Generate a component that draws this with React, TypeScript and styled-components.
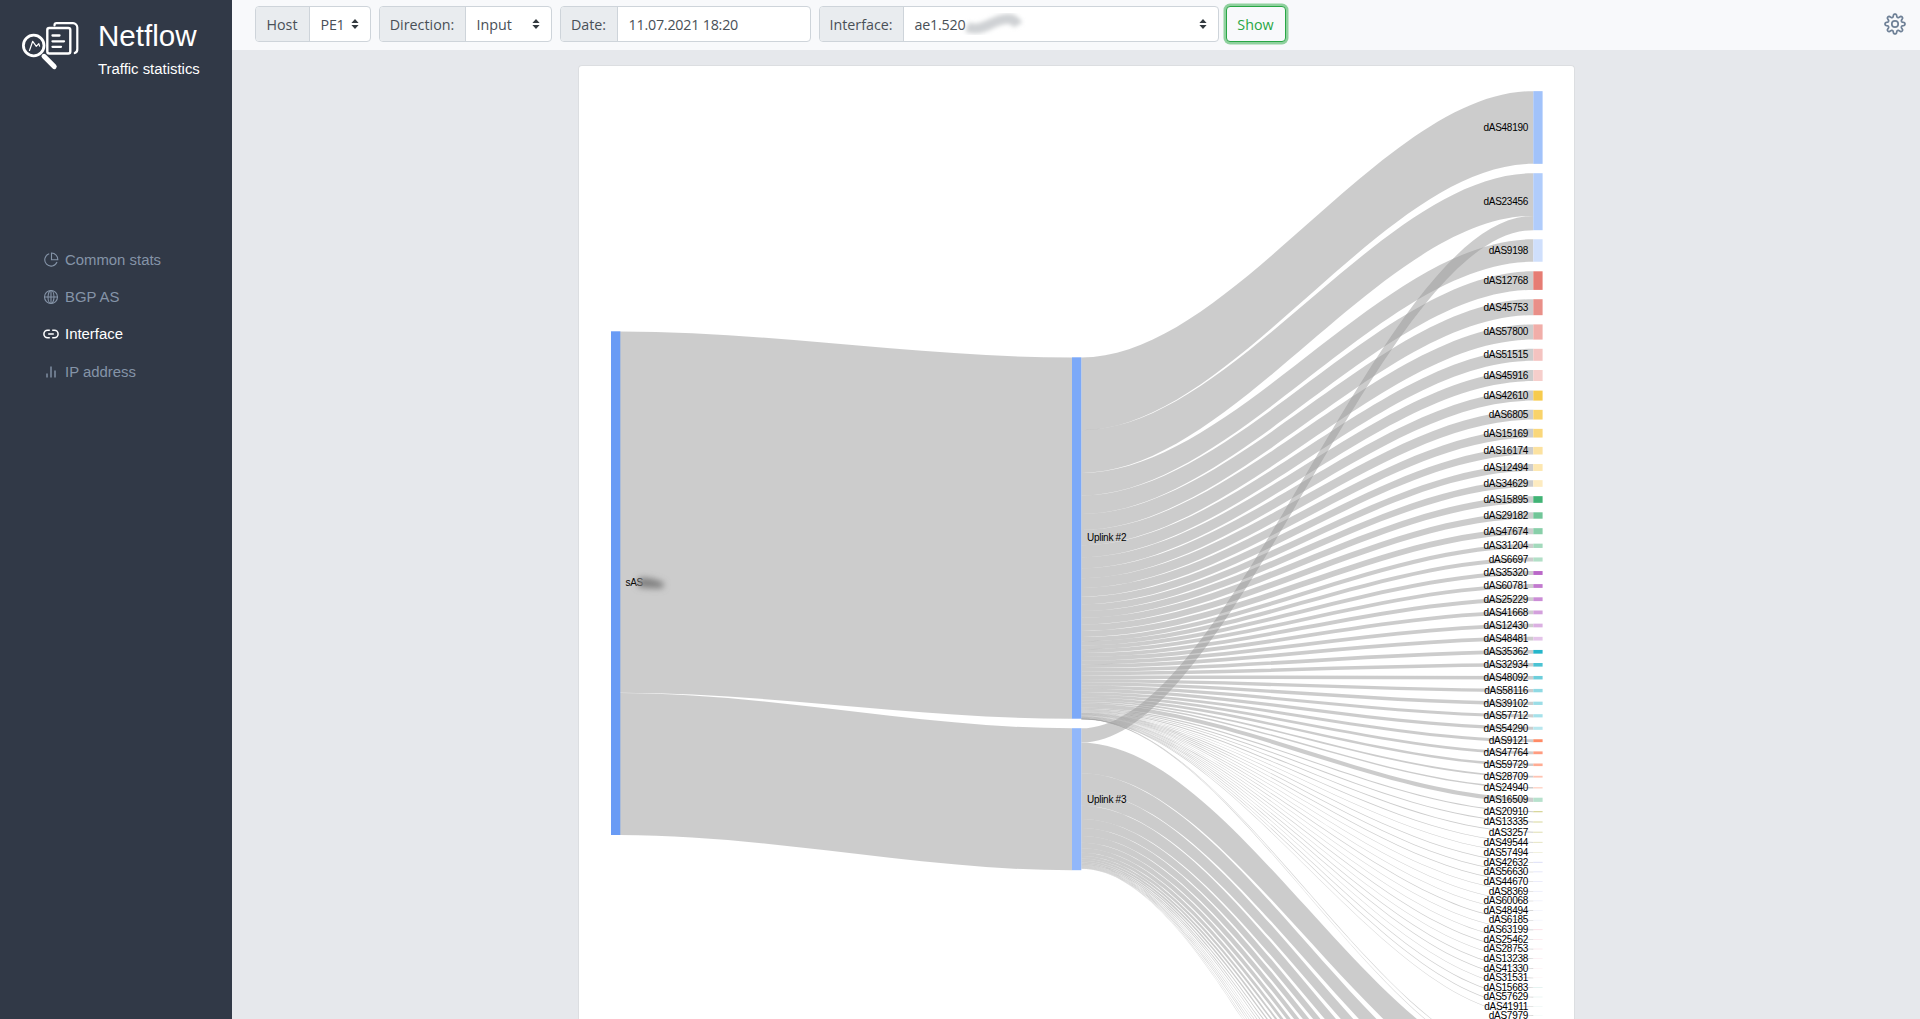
import React from "react";
import styled, { createGlobalStyle } from "styled-components";

const GlobalStyle = createGlobalStyle`
  *, *::before, *::after { box-sizing: border-box; }
  body { margin: 0; overflow: hidden; background: #e6e8ec; font-family: "Liberation Sans", Arial, sans-serif; }
`;

const Page = styled.div`
  display: flex;
  width: 100%;
  height: 100vh;
  overflow: hidden;
`;

const Sidebar = styled.aside`
  flex: none;
  width: 232px;
  height: 100%;
  background: #313947;
  color: #fff;
`;

const Brand = styled.div`
  display: flex;
  height: 90px;
  padding: 18px 0 0 20px;
  gap: 18px;
`;

const BrandText = styled.div`
  display: flex;
  flex-direction: column;
`;

const BrandName = styled.h1`
  margin: 0;
  font-size: 29.6px;
  font-weight: 400;
  line-height: 36px;
`;

const BrandSub = styled.span`
  margin-top: 6px;
  font-size: 14.9px;
  line-height: 18px;
`;

const Menu = styled.nav`
  display: flex;
  flex-direction: column;
  padding: 151px 0 0 43px;
`;

const MenuItem = styled.a<{ $active?: boolean }>`
  display: flex;
  align-items: center;
  gap: 6px;
  height: 37.3px;
  font-size: 14.9px;
  color: ${(p) => (p.$active ? "#ffffff" : "#8594a8")};
`;

const Main = styled.main`
  flex: 1;
  min-width: 0;
  display: flex;
  flex-direction: column;
`;

const Toolbar = styled.header`
  flex: none;
  display: flex;
  align-items: center;
  gap: 8px;
  height: 50px;
  padding: 0 13.5px 2px 22.5px;
  background: #f8f9fb;
  font-family: "Open Sans", "Noto Sans", sans-serif;
`;

const Group = styled.div<{ $w: number }>`
  display: flex;
  width: ${(p) => p.$w}px;
  height: 36px;
  border: 1px solid #ced4da;
  border-radius: 4px;
  overflow: hidden;
  background: #fff;
  color: #495057;
  font-size: 14.3px;
`;

const Caption = styled.label<{ $w: number }>`
  flex: none;
  display: flex;
  align-items: center;
  justify-content: center;
  width: ${(p) => p.$w}px;
  border-right: 1px solid #ced4da;
  background: #e9ecef;
`;

const Field = styled.div<{ $pad: number; $tight?: boolean }>`
  flex: 1;
  display: flex;
  align-items: center;
  white-space: nowrap;
  letter-spacing: ${(p) => (p.$tight ? "-0.22px" : "normal")};
  padding: 0 ${(p) => p.$pad}px 0 11px;
`;

const Smudge = styled.svg`
  margin: 0 0 0 -5px;
`;

const Arrows = styled.svg`
  margin-left: auto;
`;

const ShowButton = styled.button`
  width: 60px;
  height: 36px;
  margin-left: -1px;
  padding: 0;
  border: 1.5px solid #28a745;
  border-radius: 4px;
  background: #f8f9fb;
  box-shadow: 0 0 0 2.5px #8fd19e;
  color: #28a745;
  font-family: inherit;
  font-size: 14.3px;
`;

const Gear = styled.svg`
  margin-left: auto;
`;

const Content = styled.section`
  flex: 1;
  min-height: 0;
  display: flex;
  padding: 15px 0 0 346px;
`;

const Card = styled.div`
  width: 997px;
  height: 100%;
  border: 1px solid #dcdee1;
  border-bottom: 0;
  border-radius: 4px 4px 0 0;
  background: #fff;
  overflow: hidden;
`;

const Chart = styled.svg`
  display: block;
  text {
    font-family: "Liberation Sans", Arial, sans-serif;
    font-size: 10px;
    letter-spacing: -0.28px;
    fill: #000;
  }
`;

// name, centre, height, colour
type Target = [string, number, number, string];
const targets: Target[] = [
  ["dAS48190", 127.5, 72.7, "#a1c2fa"],
  ["dAS23456", 201.7, 57, "#b0ccfb"],
  ["dAS9198", 250.5, 22.5, "#cfdffc"],
  ["dAS12768", 280.6, 18.6, "#e67c73"],
  ["dAS45753", 307.2, 16, "#e98f88"],
  ["dAS57800", 332, 15.2, "#f1aea9"],
  ["dAS51515", 354.8, 12, "#f4c3c0"],
  ["dAS45916", 375.5, 11, "#f6cecb"],
  ["dAS42610", 395.6, 10, "#f7cb4d"],
  ["dAS6805", 414.7, 9.7, "#f9d36a"],
  ["dAS15169", 433.2, 8.7, "#fad77a"],
  ["dAS16174", 450.7, 7.6, "#fce2a0"],
  ["dAS12494", 467.5, 6.9, "#fde7b0"],
  ["dAS34629", 483.5, 6.7, "#fdebc0"],
  ["dAS15895", 499.5, 6.7, "#41b375"],
  ["dAS29182", 515.5, 6.4, "#71c698"],
  ["dAS47674", 531.2, 6.1, "#88cfa9"],
  ["dAS31204", 545.8, 4.3, "#a3dabc"],
  ["dAS6697", 559.5, 4.1, "#b2dfc7"],
  ["dAS35320", 573, 3.9, "#ba68c8"],
  ["dAS60781", 586, 3.8, "#c27acf"],
  ["dAS25229", 599.2, 3.8, "#cb8dd6"],
  ["dAS41668", 612.4, 3.8, "#d3a0dc"],
  ["dAS12430", 625.5, 3.7, "#dbb0e2"],
  ["dAS48481", 638.7, 3.7, "#e4c4e9"],
  ["dAS35362", 651.8, 3.7, "#26b6ca"],
  ["dAS32934", 664.8, 3.6, "#4cc3d3"],
  ["dAS48092", 677.7, 3.5, "#6dcedb"],
  ["dAS58116", 690.6, 3.4, "#8fd9e3"],
  ["dAS39102", 703.3, 3.3, "#9bdde6"],
  ["dAS57712", 715.8, 3.2, "#a5e1ea"],
  ["dAS54290", 728.3, 3.1, "#b8e7ee"],
  ["dAS9121", 740.7, 2.9, "#ff8a65"],
  ["dAS47764", 752.8, 2.8, "#ff9c80"],
  ["dAS59729", 764.8, 2.6, "#ffac93"],
  ["dAS28709", 776.7, 1.8, "#ffc3b2"],
  ["dAS24940", 787.8, 1.4, "#ffd3c6"],
  ["dAS16509", 799.8, 4.2, "#b7e1cd"],
  ["dAS20910", 811.7, 1.1, "#d1d08a"],
  ["dAS13335", 822, 1, "#d8d89c"],
  ["dAS3257", 832.2, 0.9, "#dcdba8"],
  ["dAS49544", 842.3, 0.8, "#e0dfb4"],
  ["dAS57494", 852.3, 0.6, "#e8e8c8"],
  ["dAS42632", 862.2, 0.6, "#c5caf0"],
  ["dAS56630", 871.9, 0.5, "#cdd1f2"],
  ["dAS44670", 881.5, 0.5, "#d6d9f4"],
  ["dAS8369", 891.2, 0.5, "#dcdff6"],
  ["dAS60068", 900.9, 0.45, "#e3e5f8"],
  ["dAS48494", 910.5, 0.45, "#e8eafa"],
  ["dAS6185", 920.1, 0.4, "#e8eafa"],
  ["dAS63199", 929.8, 0.5, "#f9c6d3"],
  ["dAS25462", 939.4, 0.4, "#fad3dd"],
  ["dAS28753", 949, 0.4, "#fad3dd"],
  ["dAS13238", 958.6, 0.4, "#fbdde5"],
  ["dAS41330", 968.2, 0.35, "#fce6ec"],
  ["dAS31531", 977.8, 0.35, "#fceef1"],
  ["dAS15683", 987.4, 0.4, "#bfe0dc"],
  ["dAS57629", 997, 0.35, "#cbe6e2"],
  ["dAS41911", 1006.4, 0.3, "#d5ebe8"],
  ["dAS7979", 1015.4, 0.25, "#dff0ee"],
];

const lower = [30.6, 18.4, 14, 13.2, 9, 8, 6.8, 5.6, 4.5, 3.2, 2.6, 2.1, 1.7, 1.4, 1.1, 0.9, 0.8, 0.7, 0.6, 0.5, 0.4];

interface LinkProps { x0: number; x1: number; a: number; b: number; h: number; min?: number; }

const Link = ({ x0, x1, a, b, h, min = 0 }: LinkProps) => {
  const third = (x1 - x0) / 3;
  const p = x0 + third;
  const q = x1 - third;
  const t = Math.max(h, min);
  return (
    <path
      d={`M${x0},${a}C${p},${a} ${q},${b} ${x1},${b}L${x1},${b + t}C${q},${b + t} ${p},${a + t} ${x0},${a + t}Z`}
      fill="#999999"
      fillOpacity={0.5}
    />
  );
};

const Sankey = () => {
  const links: LinkProps[] = [
    { x0: 620, x1: 1072, a: 331.5, b: 357.5, h: 361.3 },
    { x0: 620, x1: 1072, a: 693, b: 728.3, h: 142 },
  ];
  let y = 357.5;
  targets.forEach(([name, c, h]) => {
    const linkH = name === "dAS23456" ? 42.7 : h;
    const top = name === "dAS23456" ? 173.2 : c - h / 2;
    links.push({ x0: 1081.3, x1: 1533.3, a: y, b: top, h: linkH, min: 0.6 });
    y += linkH;
  });
  links.push({ x0: 1081.3, x1: 1533.3, a: 718.4, b: 1063.4, h: 0.6 });
  links.push({ x0: 1081.3, x1: 1533.3, a: 718.6, b: 1069.5, h: 0.6 });
  links.push({ x0: 1081.3, x1: 1533.3, a: 728.3, b: 215.9, h: 14.3 });
  let src = 742.7;
  let dst = 1073.5;
  lower.forEach((h) => {
    links.push({ x0: 1081.3, x1: 1533.3, a: src, b: dst, h });
    src += h;
    dst += h + 9.3;
  });
  return (
    <Chart width="995" height="953" viewBox="579 66 995 953">
      <defs>
        <filter id="soft" x="-30%" y="-100%" width="160%" height="300%"><feGaussianBlur stdDeviation="3" /></filter>
      </defs>
      {links.map((l, i) => <Link key={i} {...l} />)}
      <rect x="611" y="331.3" width="9.3" height="503.7" fill="#699bf5" />
      <rect x="1072" y="357.3" width="9.3" height="361.4" fill="#7ca9f8" />
      <rect x="1072" y="728.2" width="9.3" height="142" fill="#91b7fa" />
      {targets.map(([n, c, h, color]) => (
        <rect key={n} x="1533.3" y={c - h / 2} width="9.3" height={h} fill={color} />
      ))}
      <text x="625.5" y="586.3">sAS</text>
      <path d="M638 578Q652 577 664 583L663 588Q650 589 638 587Z" fill="#808080" filter="url(#soft)" />
      <text x="1087" y="541.2">Uplink #2</text>
      <text x="1087" y="802.7">Uplink #3</text>
      {targets.map(([n, c]) => (
        <text key={n} x="1528" y={c + 3.3} textAnchor="end">{n}</text>
      ))}
    </Chart>
  );
};

const SelectArrows = () => (
  <Arrows width="8" height="10" viewBox="0 0 8 10" fill="#343a40">
    <path d="M4 0L7.6 4H.4ZM4 10L.4 6h7.2Z" />
  </Arrows>
);

const Logo = () => (
  <svg width="60" height="54" viewBox="20 18 60 54" fill="none" stroke="#fff" strokeLinecap="round" strokeLinejoin="round">
    <path d="M54.5 25.5v-.3a2 2 0 0 1 2-2H73a4.3 4.3 0 0 1 4.3 4.3V49a4 4 0 0 1-2.5 4" strokeWidth="2.2" />
    <rect x="47.3" y="28" width="23" height="25.5" rx="2" strokeWidth="2.4" />
    <path d="M52.5 35.5h7M52.5 41.3h11.5M52.5 46.8h8.5" strokeWidth="2.3" />
    <circle cx="33.7" cy="45.5" r="10.3" strokeWidth="2.8" fill="#313947" />
    <path d="M29.5 50.5l3.2-9.2 3.6 5 2.5-2.6.8 2.4" strokeWidth="1.2" />
    <path d="M44 56.3l10.2 10.3" strokeWidth="5" />
  </svg>
);

const icons: Record<string, React.ReactNode> = {
  pie: <><path d="M6.2 1.8A6.3 6.3 0 1 0 14 10" /><path d="M8.5 1v6.8h6.3A6.5 6.5 0 0 0 8.5 1Z" /></>,
  globe: <><circle cx="8" cy="8" r="6.5" /><ellipse cx="8" cy="8" rx="3" ry="6.5" /><path d="M1.5 8h13M8 1.5v13" /></>,
  link: <><path d="M6.8 4.3H4.6a3.7 3.7 0 0 0 0 7.4h2.2M9.2 4.3h2.2a3.7 3.7 0 0 1 0 7.4H9.2" strokeWidth="1.5" /><path d="M5.2 8h5.6" strokeWidth="1.5" /></>,
  bars: <path d="M4 13.5V9.5M8 13.5v-11M12 13.5v-7" strokeWidth="1.4" />,
};

const NavIcon = ({ name }: { name: string }) => (
  <svg width="16" height="16" viewBox="0 0 16 16" fill="none" stroke="currentColor" strokeWidth="1.1">{icons[name]}</svg>
);

const gearPath = (() => {
  const pts: string[] = [];
  for (let i = 0; i <= 192; i++) {
    const t = (i / 192) * Math.PI * 2;
    const r = 8.5 + 1.6 * Math.tanh(1.6 * Math.cos(8 * t));
    pts.push(`${(11 + r * Math.sin(t)).toFixed(2)} ${(11 - r * Math.cos(t)).toFixed(2)}`);
  }
  return `M${pts.join("L")}Z`;
})();

export default function App() {
  return (
    <Page>
      <GlobalStyle />
      <Sidebar>
        <Brand>
          <Logo />
          <BrandText>
            <BrandName>Netflow</BrandName>
            <BrandSub>Traffic statistics</BrandSub>
          </BrandText>
        </Brand>
        <Menu>
          <MenuItem><NavIcon name="pie" />Common stats</MenuItem>
          <MenuItem><NavIcon name="globe" />BGP AS</MenuItem>
          <MenuItem $active><NavIcon name="link" />Interface</MenuItem>
          <MenuItem><NavIcon name="bars" />IP address</MenuItem>
        </Menu>
      </Sidebar>
      <Main>
        <Toolbar>
          <Group $w={116}><Caption $w={54}>Host</Caption><Field $pad={11} $tight>PE1<SelectArrows /></Field></Group>
          <Group $w={173}><Caption $w={86}>Direction:</Caption><Field $pad={11}>Input<SelectArrows /></Field></Group>
          <Group $w={251}><Caption $w={57}>Date:</Caption><Field $pad={11} $tight>11.07.2021 18:20</Field></Group>
          <Group $w={400}>
            <Caption $w={84}>Interface:</Caption>
            <Field $pad={11} $tight>
              ae1.520
              <Smudge width="66" height="28" viewBox="0 0 66 28">
                <defs><filter id="smudge" x="-20%" y="-60%" width="140%" height="220%"><feGaussianBlur stdDeviation="2.3" /></filter></defs>
                <path d="M7 17C22 23 32 10 46 9Q54 8 58 15" fill="none" stroke="#cfd1d4" strokeWidth="10" filter="url(#smudge)" />
              </Smudge>
              <SelectArrows />
            </Field>
          </Group>
          <ShowButton>Show</ShowButton>
          <Gear width="24" height="24" viewBox="-1 -1 24 24" fill="none" stroke="#6f8197" strokeWidth="1.7" strokeLinejoin="round">
            <path d={gearPath} />
            <circle cx="11" cy="11" r="3.2" />
          </Gear>
        </Toolbar>
        <Content>
          <Card><Sankey /></Card>
        </Content>
      </Main>
    </Page>
  );
}
